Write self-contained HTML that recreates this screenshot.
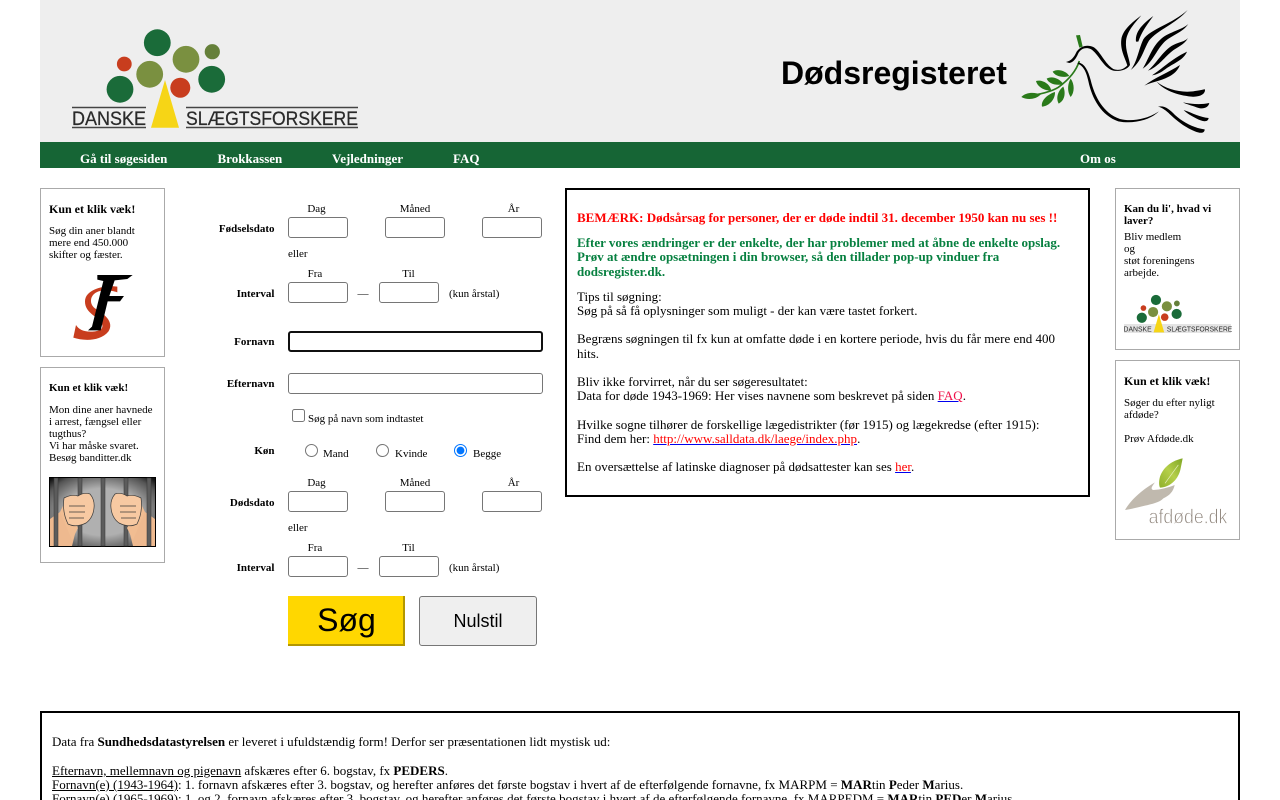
<!DOCTYPE html>
<html lang="da"><head><meta charset="utf-8"><title>Dødsregisteret</title>
<style>
html,body{margin:0;padding:0;background:#fff;width:1280px;height:800px;overflow:hidden}
body{position:relative;font-family:"Liberation Serif",serif;font-size:13px;color:#000}
.a{position:absolute}
.t{position:absolute;white-space:nowrap;line-height:14px}
.s{font-size:11px;line-height:12px;margin-top:1px}
.b{font-weight:bold}
.r{text-align:right;right:1005.5px}
.box{position:absolute;box-sizing:border-box;border:1px solid #aaa;background:#fff}
.i{position:absolute;box-sizing:border-box;height:21px;width:60px;margin:0;padding:0;border:1px solid #767676;border-radius:3px;background:#fff;outline:none}
input[type=radio],input[type=checkbox]{position:absolute;margin:0;width:13px;height:13px}
a{color:#00e;text-decoration:underline}
a span{color:#f00}
.m{position:absolute;top:151px;color:#fff;font-weight:bold;white-space:nowrap;line-height:15px}
.c{position:absolute;text-align:center;width:60px}
</style></head><body>
<div class="a" style="left:40px;top:0;width:1200px;height:142px;background:#eee"></div>
<div class="a" style="left:40px;top:142px;width:1200px;height:26px;background:#166535"></div>

<svg class="a" style="left:0;top:0" width="1280" height="800" viewBox="0 0 1280 800">
<defs>
<radialGradient id="bg" cx=".5" cy=".5" r=".68"><stop offset=".5" stop-color="#b0b0b0"/><stop offset=".85" stop-color="#555"/><stop offset="1" stop-color="#111"/></radialGradient>
<linearGradient id="lf" x1="1" y1="0" x2="0" y2="1"><stop offset="0" stop-color="#7fa625"/><stop offset=".5" stop-color="#b5cf4a"/><stop offset="1" stop-color="#8fb02c"/></linearGradient>
</defs>
<g id="logo">
<circle cx="157.3" cy="42.7" r="13.4" fill="#1a6b39"/><circle cx="186" cy="59.3" r="13.4" fill="#7a9040"/><circle cx="212.3" cy="51.7" r="7.6" fill="#65803a"/><circle cx="124.3" cy="64" r="7.4" fill="#c83d1e"/><circle cx="149.7" cy="74.3" r="13.4" fill="#7a9040"/><circle cx="120" cy="89.3" r="13.4" fill="#1a6b39"/><circle cx="180.3" cy="87.7" r="10" fill="#c83d1e"/><circle cx="211.7" cy="79.3" r="13.4" fill="#1a6b39"/>
<path d="M165 80L179 127.7H151Z" fill="#f6d516"/>
<path d="M72 107.5H146M72 127.5H146M186 107.5H358M186 127.5H358" stroke="#444" stroke-width="1.4"/>
<text x="72" y="125" font-family="Liberation Sans" font-size="19.5" fill="#2a2a2a" stroke="#2a2a2a" stroke-width=".25" textLength="74" lengthAdjust="spacingAndGlyphs">DANSKE</text>
<text x="186" y="125" font-family="Liberation Sans" font-size="19.5" fill="#2a2a2a" stroke="#2a2a2a" stroke-width=".25" textLength="172" lengthAdjust="spacingAndGlyphs">SLÆGTSFORSKERE</text>
</g>

<!-- dove -->
<g transform="translate(1000 0) scale(.3333)">
<path d="M228 106L240 105L248 140L238 143Z" fill="#2a7a1a"/>
<path d="M238 183C228 215 205 240 175 262C150 278 110 285 72 290" fill="none" stroke="#2a7a1a" stroke-width="5"/>
<path d="M64 291C78 276 105 276 122 284C105 300 80 300 64 291Z
M108 243C125 238 150 250 154 272C132 272 112 260 108 243Z
M140 236C155 226 180 236 190 252C170 258 146 252 140 236Z
M158 215C172 205 198 212 208 228C190 234 166 230 158 215Z
M126 320C122 300 145 282 165 276C166 298 148 318 126 320Z
M176 311C166 292 176 270 190 260C198 280 194 302 176 311Z
M212 291C200 272 204 250 212 236C224 252 224 278 212 291Z" fill="#2a7a1a"/>
<path d="M198 186C215 182 222 172 230 155C242 138 262 132 282 142C302 156 314 190 340 207C355 213 372 208 382 196C376 175 360 150 364 118C368 90 395 68 424 46C402 72 380 95 378 125C376 152 388 175 390 195C382 210 358 215 340 212C310 204 295 160 272 147C255 140 240 148 234 162C228 176 220 187 208 189Z" fill="#000"/>
<path d="M236 187C254 192 264 210 272 240C284 290 310 340 360 357C395 366 440 358 477 334C445 364 395 372 355 364C305 347 276 297 265 243C258 212 250 198 232 190Z" fill="#000"/>
<path d="M408 125C404 95 430 70 460 48C442 74 426 92 415 125Z
M392 210C412 185 415 150 430 118C450 88 520 70 563 30C530 70 472 90 447 122C430 150 425 185 392 210Z
M428 206C445 180 455 140 485 115C510 95 545 90 565 72C548 98 512 107 492 127C468 152 458 187 428 206Z
M444 212C470 190 490 150 520 135C540 125 555 125 564 114C552 136 532 140 512 157C492 174 472 202 444 212Z
M456 226C485 208 510 180 561 155C552 180 517 192 497 207C482 218 470 224 456 226Z
M433 257C465 232 505 218 540 195C530 222 502 234 477 242C460 247 445 251 433 257Z" fill="#000"/>
<path d="M470 245C500 270 550 280 585 273C600 271 610 268 615 268C617 282 600 292 575 290C530 286 490 270 470 245Z
M549 307C575 312 600 315 628 309C624 326 605 328 590 322C575 316 560 313 549 307Z
M551 330C580 340 600 352 626 354C624 369 605 364 590 356C575 348 560 340 551 330Z
M474 320C495 316 508 328 525 345C550 368 585 385 614 388C614 401 600 400 585 394C555 382 530 362 510 343C498 332 486 322 474 320Z" fill="#000"/>
</g>

<!-- SF logo -->
<g transform="translate(40 185) scale(.3333)">
<path d="M232 305C200 300 135 310 135 350C135 385 175 395 185 415C195 435 170 440 150 440C130 440 115 432 108 420L100 458C130 468 180 470 205 440C225 410 190 385 165 370C145 355 150 325 180 318C200 314 220 318 232 322Z" fill="#c83d1e"/>
<path d="M172 270H278L262 282L224 286L208 333L252 333L240 349L203 349L182 436H144L156 425L190 288L172 284Z" fill="#000"/>
</g>

<!-- bars image -->
<g>
<rect x="49.5" y="477.5" width="106" height="69" fill="url(#bg)" stroke="#000" stroke-width="1"/>
<path d="M50 519L60 512L76 530L72 546H50Z M155 519L145 512L129 530L133 546H155Z" fill="#eeb98f"/>
<g fill="#5c5c5c" stroke="#333" stroke-width=".5"><rect x="54" y="478" width="4" height="68"/><rect x="78" y="478" width="4" height="68"/><rect x="101" y="478" width="4" height="68"/><rect x="124" y="478" width="4" height="68"/><rect x="147" y="478" width="4" height="68"/></g>
<path d="M60 512L64 504L78 528L72 540Z M145 512L141 504L127 528L133 540Z" fill="#f1bd92"/>
<path d="M64 498Q72 494 78 496Q84 492 90 494Q95 500 94 508Q93 518 86 523Q76 528 68 524Q62 512 64 498Z M141 498Q133 494 127 496Q121 492 115 494Q110 500 111 508Q112 518 119 523Q129 528 137 524Q143 512 141 498Z" fill="#f7c9a2" stroke="#3a3a3a" stroke-width=".7"/>
<path d="M69 506H85M69 512H85M69 518H84M120 506H136M120 512H136M121 518H136" stroke="#3a3a3a" stroke-width=".7"/>
</g>

<!-- mini logo -->
<rect x="1124" y="324" width="107" height="9" fill="#e4e4e4"/>
<g transform="translate(1096.2 283.8) scale(.38)">
<circle cx="157.3" cy="42.7" r="13.4" fill="#1a6b39"/><circle cx="186" cy="59.3" r="13.4" fill="#7a9040"/><circle cx="212.3" cy="51.7" r="7.6" fill="#65803a"/><circle cx="124.3" cy="64" r="7.4" fill="#c83d1e"/><circle cx="149.7" cy="74.3" r="13.4" fill="#7a9040"/><circle cx="120" cy="89.3" r="13.4" fill="#1a6b39"/><circle cx="180.3" cy="87.7" r="10" fill="#c83d1e"/><circle cx="211.7" cy="79.3" r="13.4" fill="#1a6b39"/>
<path d="M165 80L179 127.7H151Z" fill="#f6d516"/>
<text x="72" y="125" font-family="Liberation Sans" font-size="19.5" fill="#2a2a2a" textLength="74" lengthAdjust="spacingAndGlyphs">DANSKE</text>
<text x="186" y="125" font-family="Liberation Sans" font-size="19.5" fill="#2a2a2a" textLength="172" lengthAdjust="spacingAndGlyphs">SLÆGTSFORSKERE</text>
</g>

<!-- afdoede -->
<g transform="translate(1110 355) scale(.3333)">
<path d="M218 310C188 316 160 335 150 365C146 380 147 392 150 398C182 396 206 372 212 340Z" fill="url(#lf)"/>
<path d="M205 330L165 385" stroke="#e8f0c0" stroke-width="2" fill="none"/>
<path d="M45 465C62 435 95 405 135 382C126 394 120 402 130 405C150 404 175 398 194 390C190 410 178 422 160 430C150 442 125 447 105 452C85 457 65 462 45 465Z" fill="#c0b9ae"/>
<text x="116" y="505" font-family="Liberation Sans" font-size="62" fill="#8f857c" stroke="#fff" stroke-width="2" paint-order="normal" textLength="236" lengthAdjust="spacingAndGlyphs">afdøde.dk</text>
</g>
</svg>

<div class="t b" style="left:781px;top:54px;font:bold 32px/38px 'Liberation Sans',sans-serif;color:#000">Dødsregisteret</div>
<div class="m" style="left:80px">Gå til søgesiden</div>
<div class="m" style="left:217.5px">Brokkassen</div>
<div class="m" style="left:332px">Vejledninger</div>
<div class="m" style="left:453px">FAQ</div>
<div class="m" style="left:1080px">Om os</div>

<!-- left -->
<div class="box" style="left:40px;top:188px;width:125px;height:169px;background:none"></div>
<div class="box" style="left:40px;top:367px;width:125px;height:196px;background:none"></div>
<div class="t b" style="left:49px;top:202px;font-size:12px">Kun et klik væk!</div>
<div class="t s" style="left:49px;top:224px">Søg din aner blandt</div>
<div class="t s" style="left:49px;top:236px">mere end 450.000</div>
<div class="t s" style="left:49px;top:248px">skifter og fæster.</div>
<div class="t s b" style="left:49px;top:381px">Kun et klik væk!</div>
<div class="t s" style="left:49px;top:403px">Mon dine aner havnede</div>
<div class="t s" style="left:49px;top:415px">i arrest, fængsel eller</div>
<div class="t s" style="left:49px;top:427px">tugthus?</div>
<div class="t s" style="left:49px;top:439px">Vi har måske svaret.</div>
<div class="t s" style="left:49px;top:451px">Besøg banditter.dk</div>

<!-- right -->
<div class="box" style="left:1115px;top:188px;width:125px;height:162px;background:none"></div>
<div class="box" style="left:1115px;top:360px;width:125px;height:180px;background:none"></div>
<div class="t s b" style="left:1124px;top:202px">Kan du li', hvad vi</div>
<div class="t s b" style="left:1124px;top:214px">laver?</div>
<div class="t s" style="left:1124px;top:230px">Bliv medlem</div>
<div class="t s" style="left:1124px;top:242px">og</div>
<div class="t s" style="left:1124px;top:254px">støt foreningens</div>
<div class="t s" style="left:1124px;top:266px">arbejde.</div>
<div class="t b" style="left:1124px;top:374px;font-size:12px">Kun et klik væk!</div>
<div class="t s" style="left:1124px;top:396px">Søger du efter nyligt</div>
<div class="t s" style="left:1124px;top:408px">afdøde?</div>
<div class="t s" style="left:1124px;top:432px">Prøv Afdøde.dk</div>

<!-- form -->
<div class="t s c" style="left:286.5px;top:202px">Dag</div><div class="t s c" style="left:385px;top:202px">Måned</div><div class="t s c" style="left:483.5px;top:202px">År</div>
<div class="t s b r" style="top:222px">Fødselsdato</div>
<input class="i" style="left:288px;top:217px"><input class="i" style="left:385px;top:217px"><input class="i" style="left:482px;top:217px">
<div class="t s" style="left:288px;top:247px">eller</div>
<div class="t s c" style="left:285px;top:267px">Fra</div><div class="t s c" style="left:378.5px;top:267px">Til</div>
<div class="t s b r" style="top:287px">Interval</div>
<input class="i" style="left:288px;top:282px"><div class="t s" style="left:357.5px;top:287px">—</div><input class="i" style="left:379px;top:282px"><div class="t s" style="left:449px;top:287px">(kun årstal)</div>
<div class="t s b r" style="top:335px">Fornavn</div>
<input class="i" style="left:288px;top:331px;width:255px;border:2px solid #101010;border-radius:3px">
<div class="t s b r" style="top:377px">Efternavn</div>
<input class="i" style="left:288px;top:373px;width:255px">
<input type="checkbox" style="left:292px;top:409px"><div class="t s" style="left:308px;top:412px">Søg på navn som indtastet</div>
<div class="t s b r" style="top:444px">Køn</div>
<input type="radio" name="k" style="left:305px;top:444px"><div class="t s" style="left:323px;top:447px">Mand</div>
<input type="radio" name="k" style="left:376px;top:444px"><div class="t s" style="left:395px;top:447px">Kvinde</div>
<input type="radio" name="k" checked style="left:454px;top:444px"><div class="t s" style="left:473px;top:447px">Begge</div>
<div class="t s c" style="left:286.5px;top:476px">Dag</div><div class="t s c" style="left:385px;top:476px">Måned</div><div class="t s c" style="left:483.5px;top:476px">År</div>
<div class="t s b r" style="top:496px">Dødsdato</div>
<input class="i" style="left:288px;top:491px"><input class="i" style="left:385px;top:491px"><input class="i" style="left:482px;top:491px">
<div class="t s" style="left:288px;top:521px">eller</div>
<div class="t s c" style="left:285px;top:541px">Fra</div><div class="t s c" style="left:378.5px;top:541px">Til</div>
<div class="t s b r" style="top:561px">Interval</div>
<input class="i" style="left:288px;top:556px"><div class="t s" style="left:357.5px;top:561px">—</div><input class="i" style="left:379px;top:556px"><div class="t s" style="left:449px;top:561px">(kun årstal)</div>
<div class="a" style="left:288px;top:596px;width:117px;height:50px;box-sizing:border-box;padding-left:2px;background:#ffd700;border-right:2px solid #b39700;border-bottom:2px solid #b39700;text-align:center;font:32px/48px 'Liberation Sans',sans-serif">Søg</div>
<div class="a" style="left:419px;top:596px;width:118px;height:50px;box-sizing:border-box;background:#efefef;border:1px solid #767676;border-radius:3px;text-align:center;font:18px/48px 'Liberation Sans',sans-serif">Nulstil</div>

<!-- main -->
<div class="a" style="left:565px;top:188px;width:525px;height:309px;box-sizing:border-box;border:2px solid #000"></div>
<div class="t b" style="left:577px;top:211px;color:#f00">BEMÆRK: Dødsårsag for personer, der er døde indtil 31. december 1950 kan nu ses !!</div>
<div class="t b" style="left:577px;top:236px;color:#078040">Efter vores ændringer er der enkelte, der har problemer med at åbne de enkelte opslag.</div>
<div class="t b" style="left:577px;top:250px;color:#078040">Prøv at ændre opsætningen i din browser, så den tillader pop-up vinduer fra</div>
<div class="t b" style="left:577px;top:265px;color:#078040">dodsregister.dk.</div>
<div class="t" style="left:577px;top:290px">Tips til søgning:</div>
<div class="t" style="left:577px;top:304px">Søg på så få oplysninger som muligt - der kan være tastet forkert.</div>
<div class="t" style="left:577px;top:332px">Begræns søgningen til fx kun at omfatte døde i en kortere periode, hvis du får mere end 400</div>
<div class="t" style="left:577px;top:347px">hits.</div>
<div class="t" style="left:577px;top:375px">Bliv ikke forvirret, når du ser søgeresultatet:</div>
<div class="t" style="left:577px;top:389px">Data for døde 1943-1969: Her vises navnene som beskrevet på siden <a href="#"><span style="color:#f0104a">FAQ</span></a>.</div>
<div class="t" style="left:577px;top:418px">Hvilke sogne tilhører de forskellige lægedistrikter (før 1915) og lægekredse (efter 1915):</div>
<div class="t" style="left:577px;top:432px">Find dem her: <a href="#"><span>http://www.salldata.dk/laege/index.php</span></a>.</div>
<div class="t" style="left:577px;top:460px">En oversættelse af latinske diagnoser på dødsattester kan ses <a href="#"><span>her</span></a>.</div>

<!-- bottom -->
<div class="a" style="left:40px;top:711px;width:1200px;height:120px;box-sizing:border-box;border:2px solid #000"></div>
<div class="t" style="left:52px;top:735px">Data fra <b>Sundhedsdatastyrelsen</b> er leveret i ufuldstændig form! Derfor ser præsentationen lidt mystisk ud:</div>
<div class="t" style="left:52px;top:764px"><u>Efternavn, mellemnavn og pigenavn</u> afskæres efter 6. bogstav, fx <b>PEDERS</b>.</div>
<div class="t" style="left:52px;top:778px"><u>Fornavn(e) (1943-1964)</u>: 1. fornavn afskæres efter 3. bogstav, og herefter anføres det første bogstav i hvert af de efterfølgende fornavne, fx MARPM = <b>MAR</b>tin <b>P</b>eder <b>M</b>arius.</div>
<div class="t" style="left:52px;top:792px"><u>Fornavn(e) (1965-1969)</u>: 1. og 2. fornavn afskæres efter 3. bogstav, og herefter anføres det første bogstav i hvert af de efterfølgende fornavne, fx MARPEDM = <b>MAR</b>tin <b>PED</b>er <b>M</b>arius.</div>
</body></html>
